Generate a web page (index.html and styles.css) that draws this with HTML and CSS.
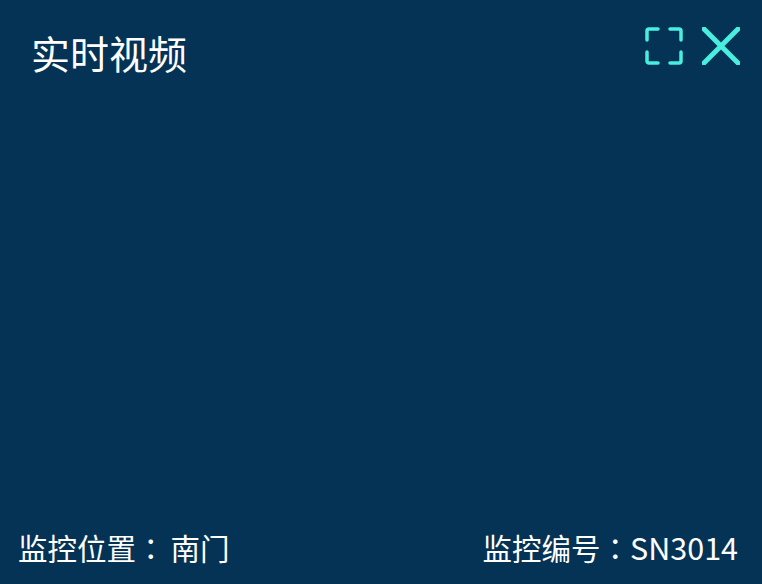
FILE: index.html
```html
<!DOCTYPE html>
<html lang="zh-CN">
<head>
    <meta charset="UTF-8">
    <meta name="viewport" content="width=device-width, initial-scale=1.0">
    <title>实时视频</title>
    <link rel="stylesheet" href="styles.css">
</head>
<body>

    <div class="panel">
        <!-- Header -->
        <div class="panel-header">
            <h1 class="panel-title">实时视频</h1>
            <div class="panel-tools">
                <svg class="icon-full" width="38" height="38" viewBox="0 0 38 38" fill="none">
                    <path d="M2 13V4a2 2 0 0 1 2-2h9M25 2h9a2 2 0 0 1 2 2v9M36 25v9a2 2 0 0 1-2 2h-9M13 36H4a2 2 0 0 1-2-2v-9"/>
                </svg>
                <svg class="icon-close" width="38" height="38" viewBox="0 0 38 38" fill="none">
                    <path d="M2 2L36 36M36 2L2 36"/>
                </svg>
            </div>
        </div>

        <!-- Video area -->
        <div class="panel-video"></div>

        <!-- Footer -->
        <div class="panel-footer">
            <span>监控位置<span class="colon" lang="zh-TW">：</span><span class="place">南门</span></span>
            <span>监控编号<span class="colon" lang="zh-TW">：</span><span class="serial">SN3014</span></span>
        </div>
    </div>

</body>
</html>
```

FILE: styles.css
```css
/* Page */
body {
    margin: 0;
    background-color: #043355;
    font-family: "Noto Sans CJK SC", "Noto Sans", sans-serif;
    color: #fff;
}

/* Panel */
.panel {
    display: flex;
    flex-direction: column;
    width: 762px;
    height: 584px;
    overflow: hidden;
}

/* Header */
.panel-header {
    display: flex;
    justify-content: space-between;
    align-items: flex-start;
    height: 110px;
    padding: 27px 22px 0 31px;
    box-sizing: border-box;
}

.panel-title {
    margin: -3px 0 0;
    font-size: 39px;
    font-weight: 400;
    line-height: 56px;
}

.panel-tools {
    display: flex;
    gap: 19px;
}

.panel-tools path {
    stroke: #48eee0;
    stroke-linecap: round;
    stroke-linejoin: round;
}

.icon-full path {
    stroke-width: 3.5;
}

.icon-close path {
    stroke-width: 5;
}

/* Video area */
.panel-video {
    flex: 1;
}

/* Footer */
.panel-footer {
    display: flex;
    justify-content: space-between;
    height: 60px;
    padding: 0 24px 0 18px;
    font-size: 29.5px;
    line-height: 46px;
}

.colon {
    font-family: "Noto Sans CJK TC", sans-serif;
}

.place {
    margin-left: 5px;
}

.serial {
    font-size: 30.5px;
}
```
